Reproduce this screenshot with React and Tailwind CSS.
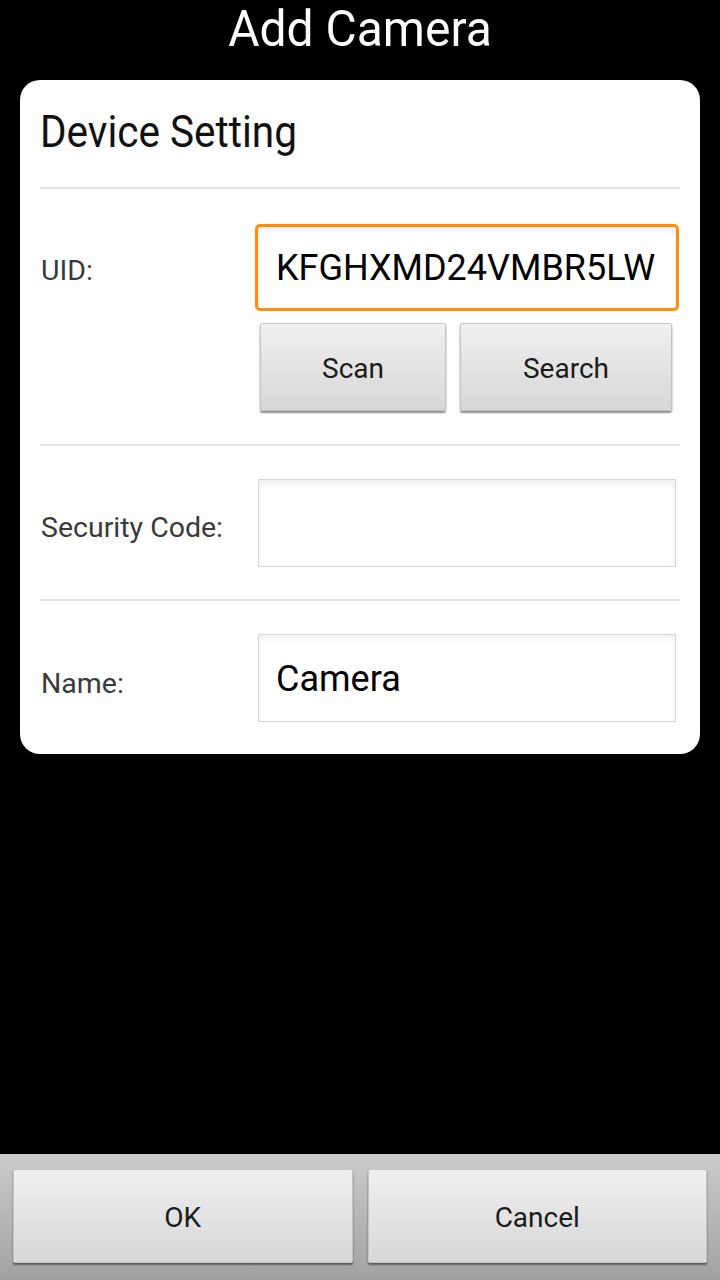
import React from 'react';

const font = { fontFamily: 'Roboto, "Noto Sans", sans-serif' };

const Divider = () => <div className="h-[2px] bg-[#e3e3e3]" />;

const TextBox = ({ value }) => (
  <div className="h-[88px] w-full border border-[#d6d6d6] bg-white shadow-[inset_0_4px_6px_rgba(0,0,0,0.06)] flex items-center pl-[17px] pt-[2px] text-[36px] text-black">
    {value}
  </div>
);

const GrayButton = ({ label, className }) => (
  <button
    className={
      'flex items-center justify-center pt-[4px] rounded-[2px] border border-[#c4c4c4] bg-gradient-to-b from-[#f0f0f0] to-[#d7d7d7] shadow-[0_2px_2px_rgba(0,0,0,0.45)] text-[#1c1c1c] ' +
      className
    }
  >
    {label}
  </button>
);

const App = () => {
  return (
    <div className="h-[1280px] w-[720px] bg-black flex flex-col" style={font}>
      <div className="h-[80px] flex justify-center">
        <h1 className="text-[48px] leading-none text-white mt-[6px] scale-y-[1.06]">Add Camera</h1>
      </div>

      <div className="mx-[20px] bg-white rounded-[20px] px-[20px]">
        <div className="h-[107px] flex items-center">
          <h2 className="text-[40.5px] text-[#111] -mt-[3px] scale-y-[1.08] origin-left">Device Setting</h2>
        </div>
        <Divider />

        <div className="flex pt-[35px] pb-[33px]">
          <div className="w-[218px] h-[87px] flex items-center pt-[8px] text-[28.5px] text-[#3a3a3a] pl-[1px]">UID:</div>
          <div className="flex-1 flex flex-col">
            <div className="-ml-[3px] mr-[1px] h-[87px] rounded-[5px] border-[3px] border-[#ff8c0f] bg-white shadow-[inset_0_3px_6px_rgba(0,0,0,0.08)] flex items-center pl-[18px] text-[36px] text-black">
              KFGHXMD24VMBR5LW
            </div>
            <div className="flex gap-[14px] mt-[12px] ml-[2px]">
              <GrayButton label="Scan" className="w-[186px] h-[88px] text-[28px]" />
              <GrayButton label="Search" className="w-[212px] h-[88px] text-[28px]" />
            </div>
          </div>
        </div>
        <Divider />

        <div className="flex pt-[33px] pb-[32px]">
          <div className="w-[218px] flex items-center pt-[10px] text-[28.5px] text-[#3a3a3a] pl-[1px]">Security Code:</div>
          <div className="flex-1 pr-[4px]">
            <TextBox value="" />
          </div>
        </div>
        <Divider />

        <div className="flex pt-[33px] pb-[32px]">
          <div className="w-[218px] flex items-center text-[28.5px] text-[#3a3a3a] pl-[1px] pt-[12px]">Name:</div>
          <div className="flex-1 pr-[4px]">
            <TextBox value="Camera" />
          </div>
        </div>
      </div>

      <div className="flex-1" />

      <div className="h-[126px] bg-gradient-to-b from-[#cbcbcb] to-[#a2a2a2] flex gap-[15px] px-[13px] pt-[15px]">
        <GrayButton label="OK" className="flex-1 h-[94px] text-[28px] from-[#ebebeb] to-[#d2d2d2] border-[#b5b5b5]" />
        <GrayButton label="Cancel" className="flex-1 h-[94px] text-[28px] from-[#ebebeb] to-[#d2d2d2] border-[#b5b5b5]" />
      </div>
    </div>
  );
};

export default App;
